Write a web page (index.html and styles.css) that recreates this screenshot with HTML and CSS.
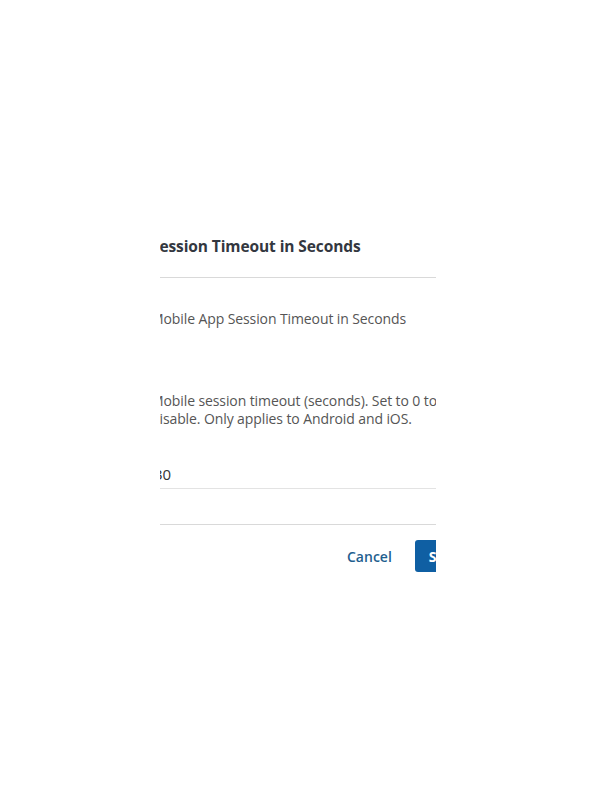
FILE: index.html
```html
<!DOCTYPE html>
<html>
<head>
<meta charset="utf-8">
<link rel="stylesheet" href="styles.css">
</head>
<body>
<div class="viewport">
  <div class="clip">
    <div class="dialog">
      <div class="header">
        <h2 class="title">Session Timeout in Seconds</h2>
      </div>
      <div class="body">
        <label class="label">Mobile App Session Timeout in Seconds</label>
        <p class="help">Mobile session timeout (seconds). Set to 0 to disable. Only applies to Android and iOS.</p>
        <div class="input">30</div>
      </div>
      <div class="footer">
        <button class="btn-cancel">Cancel</button>
        <button class="btn-save">Save</button>
      </div>
    </div>
  </div>
</div>
</body>
</html>
```

FILE: styles.css
```css
html, body {
  margin: 0;
  padding: 0;
  background: #ffffff;
}
body {
  font-family: "Open Sans", "Noto Sans", sans-serif;
  width: 600px;
  height: 800px;
}
.viewport {
  padding-top: 228px;
  padding-left: 160px;
}
.clip {
  width: 276px;
  overflow: hidden;
}
.dialog {
  margin-left: -9px;
  width: 340px;
}
.header {
  border-bottom: 1px solid #d9d9d9;
  padding: 8px 0 21px 0;
}
.title {
  margin: 0;
  font-size: 15.5px;
  font-weight: 700;
  line-height: 20px;
  letter-spacing: -0.1px;
  color: #333740;
}
.body {
  padding-top: 31px;
  border-bottom: 1px solid #d9d9d9;
  padding-bottom: 35px;
}
.label {
  display: block;
  font-size: 14px;
  line-height: 20px;
  letter-spacing: -0.1px;
  color: #555;
}
.help {
  margin: 63px 0 0 0;
  font-size: 14px;
  line-height: 18px;
  letter-spacing: -0.1px;
  color: #555;
  width: 290px;
}
.input {
  margin-top: 36px;
  font-size: 15px;
  line-height: 20px;
  color: #333;
  padding-left: 3px;
  padding-bottom: 4px;
  border-bottom: 1px solid #e3e3e3;
}
.footer {
  display: flex;
  align-items: center;
  padding-top: 15px;
  padding-left: 196px;
}
.btn-cancel {
  font-family: inherit;
  background: none;
  border: none;
  font-size: 14px;
  font-weight: 600;
  color: #1f5f8f;
  padding: 0;
  margin-right: 23px;
}
.btn-save {
  font-family: inherit;
  background: #0f5fa3;
  color: #fff;
  border: none;
  border-radius: 3px;
  height: 32px;
  padding: 0 14px;
  font-size: 14px;
  font-weight: 700;
}
```
